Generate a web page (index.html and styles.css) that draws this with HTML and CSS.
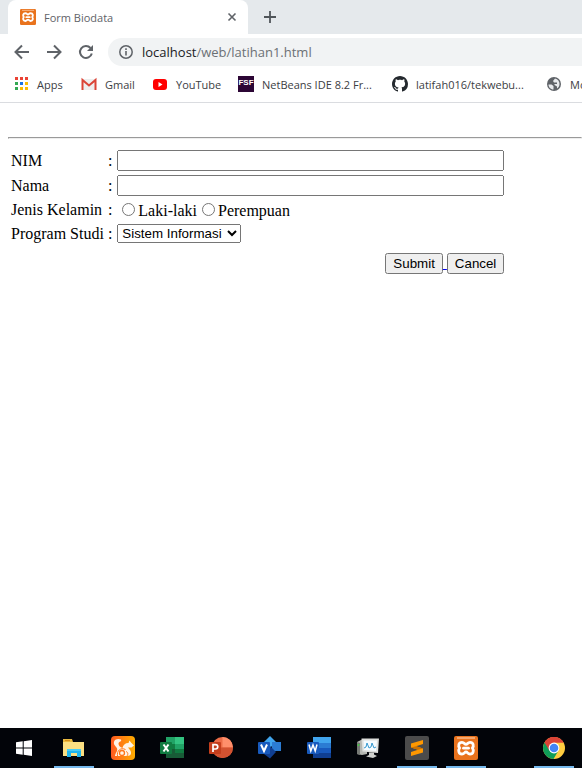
FILE: index.html
```html
<!DOCTYPE html>
<html lang="id">
<head>
<meta charset="utf-8">
<title>Form Biodata</title>
<link rel="stylesheet" href="styles.css">
</head>
<body>
<svg class="defs" aria-hidden="true">
  <symbol id="xampp" viewBox="0 0 24 24">
    <rect width="24" height="24" rx="2" fill="#e9731d"/>
    <path d="M3 2h18" stroke="#f7b98a" stroke-width="1.500"/>
    <path d="M8 6.300C4.500 6.300 4 9.800 5.600 12C4 14.200 4.500 18 8 18C10.500 18 10.300 16 12 16S13.500 18 16 18C19.500 18 20 14.200 18.400 12C20 9.800 19.500 6.300 16 6.300C13.500 6.300 13.700 8.300 12 8.300S10.500 6.300 8 6.300Z" fill="none" stroke="#fff" stroke-width="2.800"/>
    <path d="M9.500 12.200h5" stroke="#fff" stroke-width="2.800" stroke-linecap="round"/>
  </symbol>
</svg>
<header class="browser">
  <div class="tabs">
    <div class="tab">
      <svg class="i16"><use href="#xampp"/></svg>
      <span class="tab-title">Form Biodata</span>
      <button class="icon-button" aria-label="Close tab"><svg class="i16" viewBox="0 0 16 16"><path d="M4.500 4.500l7 7M11.500 4.500l-7 7" stroke="#5f6368" stroke-width="1.600"/></svg></button>
    </div>
    <button class="icon-button new-tab" aria-label="New tab"><svg class="i16" viewBox="0 0 16 16"><path d="M8 2v12M2 8h12" stroke="#50555a" stroke-width="1.800"/></svg></button>
  </div>
  <div class="toolbar">
    <button class="icon-button" aria-label="Back"><svg class="i16" viewBox="0 0 16 16"><path d="M15 8H2M8 1.500L1.500 8L8 14.500" fill="none" stroke="#5f6368" stroke-width="2"/></svg></button>
    <button class="icon-button" aria-label="Forward"><svg class="i16" viewBox="0 0 16 16"><path d="M1 8h13M8 1.500L14.500 8L8 14.500" fill="none" stroke="#5f6368" stroke-width="2"/></svg></button>
    <button class="icon-button" aria-label="Reload"><svg class="i16" viewBox="0 0 16 16"><path d="M13.800 9.500A6 6 0 1 1 12.500 4" fill="none" stroke="#5f6368" stroke-width="2"/><path d="M15 1v6H9z" fill="#5f6368"/></svg></button>
    <div class="address">
      <svg class="i16" viewBox="0 0 16 16"><circle cx="8" cy="8" r="6.200" fill="none" stroke="#5f6368" stroke-width="1.500"/><path d="M8 7v4.500M8 4.300v1.600" stroke="#5f6368" stroke-width="1.600"/></svg>
      <span class="url"><span class="host">localhost</span>/web/latihan1.html</span>
    </div>
  </div>
  <nav class="bookmarks" aria-label="Bookmarks">
    <a class="bookmark apps" href="#"><svg class="i16" viewBox="0 0 16 16"><path d="M2 1h3v3H2zM7 1h3v3H7zM12 1h3v3h-3z" fill="#ea4335"/><path d="M2 6h3v3H2zM2 11h3v3H2z" fill="#34a853"/><path d="M7 6h3v3H7z" fill="#1a73e8"/><path d="M12 6h3v3h-3zM7 11h3v3H7zM12 11h3v3h-3z" fill="#fbbc04"/></svg>Apps</a>
    <a class="bookmark gmail" href="#"><svg class="i16" viewBox="0 0 16 16"><path d="M1 3h14v11H1z" fill="#eee"/><path d="M1.500 14V4L8 9.500L14.500 4v10" fill="none" stroke="#db4437" stroke-width="2"/></svg>Gmail</a>
    <a class="bookmark youtube" href="#"><svg class="i16" viewBox="0 0 16 16"><rect x="1" y="3" width="14" height="11" rx="3" fill="#f00"/><path d="M6.500 6v5L10.500 8.500z" fill="#fff"/></svg>YouTube</a>
    <a class="bookmark netbeans" href="#"><span class="fsf">FSF</span>NetBeans IDE 8.2 Fr...</a>
    <a class="bookmark github" href="#"><svg class="i16" viewBox="0 0 16 16"><path fill="#24292e" d="M8 0C3.580 0 0 3.580 0 8c0 3.540 2.290 6.530 5.470 7.590.4.070.55-.17.55-.38 0-.19-.01-.82-.01-1.490-2.010.37-2.530-.49-2.690-.94-.09-.23-.48-.94-.82-1.130-.28-.15-.68-.52-.01-.53.63-.01 1.080.58 1.230.82.72 1.210 1.870.87 2.330.66.07-.52.28-.87.51-1.070-1.780-.2-3.640-.89-3.640-3.950 0-.87.31-1.590.82-2.150-.08-.2-.36-1.020.08-2.120 0 0 .67-.21 2.200.82.64-.18 1.320-.27 2-.27s1.360.09 2 .27c1.530-1.040 2.200-.82 2.200-.82.44 1.100.16 1.920.08 2.120.51.56.82 1.270.82 2.150 0 3.070-1.870 3.750-3.650 3.950.29.25.54.73.54 1.480 0 1.070-.01 1.930-.01 2.200 0 .21.15.46.55.38A8.010 8.010 0 0 0 16 8c0-4.420-3.580-8-8-8z"/></svg>latifah016/tekwebu...</a>
    <a class="bookmark globe" href="#"><svg class="i16" viewBox="0 0 16 16"><circle cx="8" cy="8" r="7" fill="#5f6368"/><path d="M2.500 8.500h3l2 1.500v3.500C4.500 13.500 2.500 11 2.500 8.500zM7 5l2-2.500c3 .5 4.500 3 4.500 5.500 0 2-1 3.500-2.500 4.500V10.500L8.500 9V8h2.500V6.500H8z" fill="#e8eaed"/></svg>Mo</a>
  </nav>
</header>
<main>
  <hr>
  <form>
    <table>
      <tr><td><label for="nim">NIM</label></td><td class="colon">:</td><td><input class="text" type="text" id="nim"></td></tr>
      <tr><td><label for="nama">Nama</label></td><td class="colon">:</td><td><input class="text" type="text" id="nama"></td></tr>
      <tr><td>Jenis Kelamin</td><td class="colon">:</td><td><input type="radio" name="jk" id="l"><label for="l">Laki-laki</label><input type="radio" name="jk" id="p"><label for="p">Perempuan</label></td></tr>
      <tr><td><label for="prodi">Program Studi</label></td><td class="colon">:</td><td><select id="prodi"><option>Sistem Informasi</option></select></td></tr>
      <tr><td></td><td></td><td class="actions"><button type="button">Submit</button><a href="#"> </a><button type="button">Cancel</button></td></tr>
    </table>
  </form>
</main>
<footer class="taskbar">
  <button class="task" aria-label="Start"><svg class="i24" viewBox="0 0 24 24"><path d="M4 6.300L10.700 5.300V11.500H4zM11.700 5.200L20 4v7.500h-8.300zM4 12.500h6.700v6.200L4 17.700zM11.700 12.500H20V20l-8.300-1.200z" fill="#fff"/></svg></button>
  <button class="task open" aria-label="File Explorer"><svg class="i24" viewBox="0 0 24 24"><path d="M1 3h9l1 3h11v14H1z" fill="#e9b940"/><path d="M3 4h5v1H3z" fill="#d58d18"/><path d="M1 6h21v14H1z" fill="#fbdf82"/><path d="M5 13h14v8h-4v-4H9v4H5z" fill="#1fb5ee"/><path d="M5 13h14v2H5z" fill="#49ccf4"/></svg></button>
  <button class="task" aria-label="UC Browser"><svg class="i24" viewBox="0 0 24 24"><defs><linearGradient id="uc" x2="1" y2="0"><stop stop-color="#ff5a20"/><stop offset="1" stop-color="#ffad00"/></linearGradient></defs><rect width="24" height="24" rx="4" fill="url(#uc)"/><path d="M10 3.500C5 1.500 1.500 5 3.500 9c1.500 2.500 3.500 3 2.500 6-.8 2-2 3-2 5h12c4 0 5-3 3-6l-2-2.500h3.500L23 9.500l-3-3-1.500-2-1 2.500c-3.500 0-5.500 2-6 5C9 11 7.500 9.500 7.500 7.500 8 5 11 6 10 3.500z" fill="#fff4e7"/><circle cx="11" cy="17" r="2.500" fill="none" stroke="#ff7519" stroke-width="1.300"/><path d="M6.500 20c-1-5 3-9 8-6.500M15 15.500c2.500 1 2 3 1 4.500" fill="none" stroke="#ff7519"/></svg></button>
  <button class="task" aria-label="Excel"><svg class="i24" viewBox="0 0 24 24"><path d="M6 1h9v7H6z" fill="#21a366"/><path d="M15 1h9v7h-9z" fill="#33c481"/><path d="M6 8h9v7H6z" fill="#107c41"/><path d="M15 8h9v5h-9z" fill="#21a366"/><path d="M6 13h18v9H6z" fill="#185c37"/><path d="M15 13h9v4h-9z" fill="#107c41"/><rect y="6" width="12" height="12" rx="1" fill="#107c41"/><path d="M3.500 8.500l5 7M8.500 8.500l-5 7" stroke="#fff" stroke-width="2"/></svg></button>
  <button class="task" aria-label="PowerPoint"><svg class="i24" viewBox="0 0 24 24"><circle cx="13.500" cy="11.500" r="10.500" fill="#ed6c47"/><path d="M13.500 1A10.500 10.500 0 0 1 24 11.500H13.500z" fill="#ff8f6b"/><path d="M3 11.500h21a10.500 10.500 0 0 1-21 0" fill="#d35230"/><rect y="6" width="12" height="12" rx="1" fill="#c43e1c"/><path d="M4 16V8.700h2.500c3 0 3 4.300 0 4.300H4" fill="none" stroke="#fff" stroke-width="1.700"/></svg></button>
  <button class="task" aria-label="Visio"><svg class="i24" viewBox="0 0 24 24"><path d="M12 0l6 6-6 6-6-6z" fill="#41a5ee"/><path d="M14 6h9v9h-9z" fill="#2b7cd3"/><path d="M12 10l6 6-6 6.500L6 18z" fill="#103f91"/><rect y="6" width="12" height="12" rx="1" fill="#185abd"/><path d="M3 8.500l3 6.500 3-6.500" fill="none" stroke="#fff" stroke-width="2"/></svg></button>
  <button class="task" aria-label="Word"><svg class="i24" viewBox="0 0 24 24"><path d="M6 1h18v6H6z" fill="#41a5ee"/><path d="M6 7h18v5H6z" fill="#2b7cd3"/><path d="M6 12h18v5H6z" fill="#185abd"/><path d="M6 17h18v5H6z" fill="#103f91"/><rect y="6" width="12" height="12" rx="1" fill="#185abd"/><path d="M2 8.500l1.800 6.500L6 9l2.200 6L10 8.500" fill="none" stroke="#fff" stroke-width="1.500"/></svg></button>
  <button class="task" aria-label="Resource Monitor"><svg class="i24" viewBox="0 0 24 24"><path d="M1 6l6-3 4 1v14l-5 1-5-1z" fill="#b5b7b2"/><path d="M1 6l3 1v12l-3-1z" fill="#777a75"/><path d="M2.500 8v2" stroke="#4c4" stroke-width="1.500"/><path d="M5.500 2.500l17.500 0-1 14.500-15.500-1.500z" fill="#dedfdd"/><path d="M7.500 4.500H21l-1 10.500-12-1z" fill="#f5fbff"/><path d="M8 12l2-1 1-4 2 5 2-1 1-4 2 5 2-1" fill="none" stroke="#3497cf"/><path d="M13 16.500h5v2l3 1.500-4 2-7-1.500 3-1.500z" fill="#d0d1ce"/></svg></button>
  <button class="task open" aria-label="Sublime Text"><svg class="i24" viewBox="0 0 24 24"><rect width="24" height="24" rx="2" fill="#4b4b4b"/><path d="M18 4v4L11 10.300l7 2.200v4L6 20v-4l7-2.200-7-2.200V7.500z" fill="#ff9800"/><path d="M6 11.600l5-1.300 7 2.200-5 1.300z" fill="#ce7200"/></svg></button>
  <button class="task open" aria-label="XAMPP"><svg class="i24"><use href="#xampp"/></svg></button>
  <button class="task open chrome" aria-label="Chrome"><svg class="i24" viewBox="0 0 24 24"><circle cx="12" cy="12" r="11" fill="#ffcd40"/><path d="M2.500 6.500A11 11 0 0 1 21.500 6.500L12 12z" fill="#db4437"/><path d="M2.500 6.500A11 11 0 0 0 11.500 23L16.500 14.500 12 12z" fill="#0f9d58"/><path d="M12 6.500h9.500L16 13z" fill="#ffcd40"/><path d="M2.500 6.500A11 11 0 0 1 21.500 6.500H12L7 14z" fill="#db4437"/><circle cx="12" cy="12" r="5.400" fill="#fff"/><circle cx="12" cy="12" r="4.300" fill="#4285f4"/></svg></button>
</footer>
</body>
</html>
```
FILE: styles.css
```css
* { box-sizing: border-box; }
body {
  margin: 0;
  min-height: 100vh;
  display: flex;
  flex-direction: column;
  overflow-x: hidden;
  background: #fff;
  color: #000;
  font: 16px "Liberation Serif", serif;
}
.defs { display: none; }
.i16 { width: 16px; height: 16px; flex: none; display: block; }
.i24 { width: 24px; height: 24px; display: block; }
.browser {
  overflow: hidden;
  border-bottom: 1px solid #dadce0;
  font: 11px "Open Sans", sans-serif;
}
.icon-button { display: flex; padding: 0; border: 0; background: none; }
.tabs { display: flex; align-items: center; height: 34px; padding-left: 8px; background: #e5e9ec; }
.tab {
  display: flex;
  align-items: center;
  gap: 8px;
  width: 240px;
  height: 34px;
  padding: 0 8px 0 12px;
  border-radius: 8px 8px 0 0;
  background: #fff;
  color: #5f6368;
}
.tab-title { flex: 1; }
.new-tab { margin-left: 14px; }
.toolbar { display: flex; align-items: center; gap: 16px; height: 36px; padding-left: 14px; }
.address {
  flex: 1;
  display: flex;
  align-items: center;
  gap: 8px;
  height: 28px;
  margin-left: -2px;
  padding-left: 10px;
  border-radius: 14px 0 0 14px;
  background: #f1f3f4;
  color: #6b7075;
  font-size: 13px;
}
.host { color: #202124; }
.bookmarks {
  display: flex;
  align-items: center;
  height: 32px;
  padding: 0 0 4px 13px;
  white-space: nowrap;
}
.bookmark {
  display: flex;
  flex: none;
  align-items: center;
  gap: 8px;
  color: #3c4043;
  text-decoration: none;
}
.apps { width: 68px; }
.gmail { width: 71px; }
.youtube { width: 86px; }
.netbeans { width: 154px; }
.github { width: 154px; }
.fsf {
  width: 16px;
  height: 16px;
  background: #2c0635;
  color: #fff;
  font: bold 8px/14px "Liberation Sans", sans-serif;
  text-align: center;
}
main { flex: 1; padding: 34px 0 0 8px; }
hr { margin: 0 0 8px; }
.text { width: 387px; height: 21px; }
select { width: 124px; }
td { padding: 1px; }
.colon { padding-right: 2px; }
.actions { padding-top: 7px; text-align: right; }
.taskbar { display: flex; height: 40px; gap: 1px; background: #020409; }
.task {
  display: flex;
  align-items: center;
  justify-content: center;
  width: 48px;
  padding: 0;
  border: 0;
  background: none;
}
.task:first-child { margin-right: 1px; }
.open {
  background: linear-gradient(#76b9ed, #76b9ed) center bottom / 40px 2px no-repeat;
}
.chrome { margin-left: 39px; }
```
